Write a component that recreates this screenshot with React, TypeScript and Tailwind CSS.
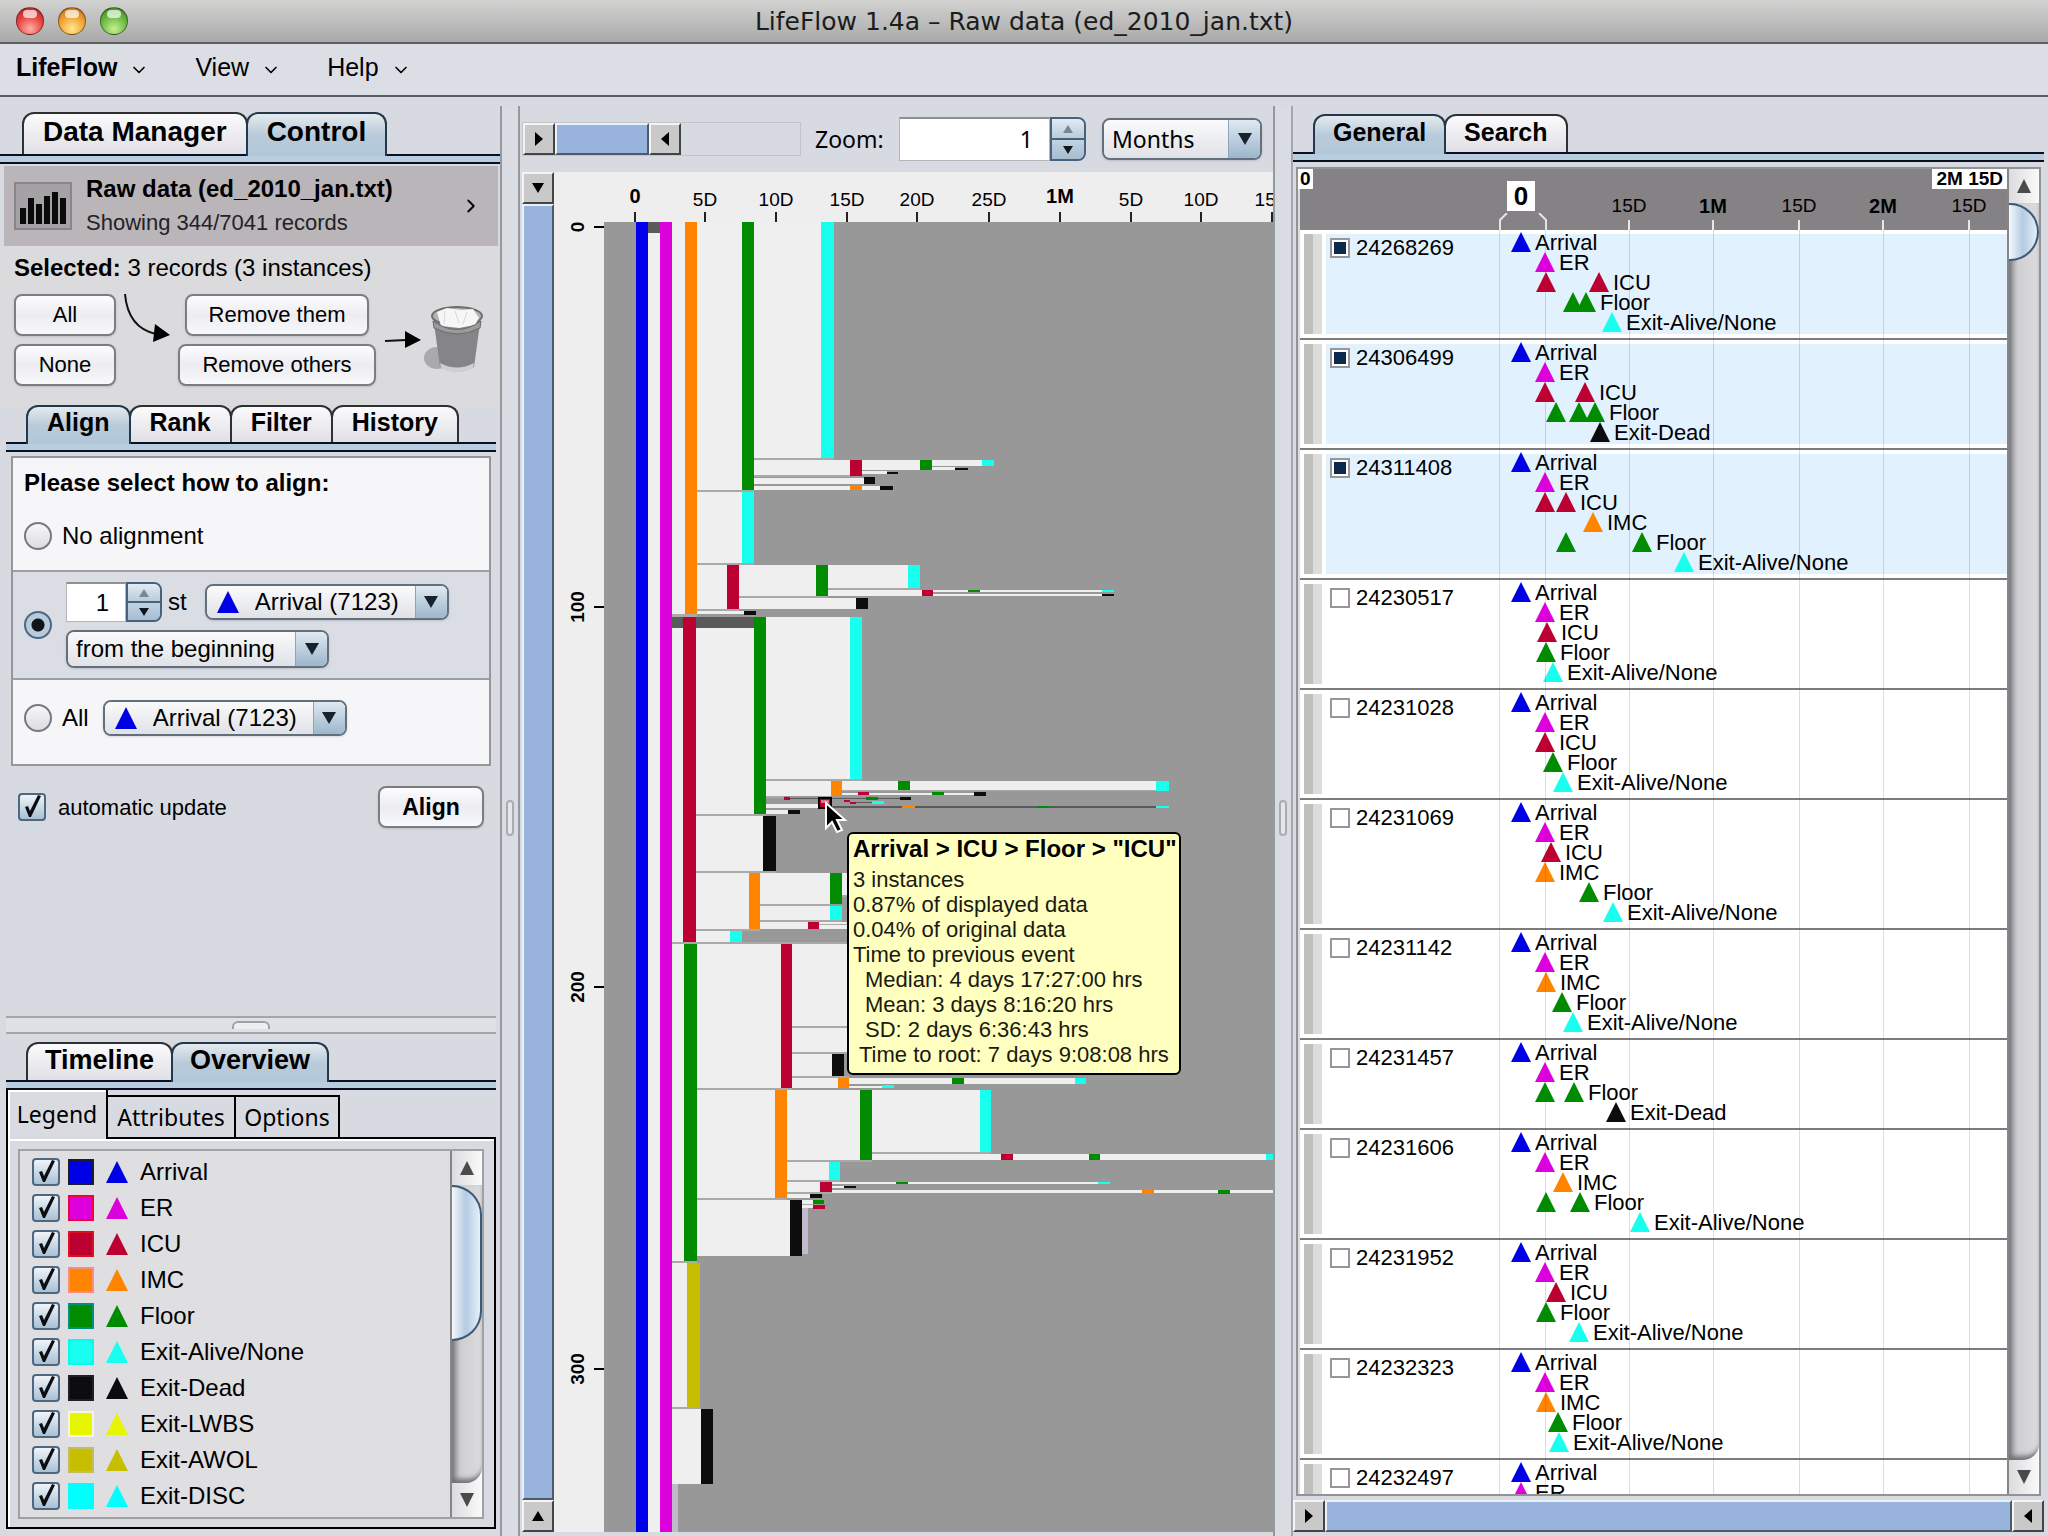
import React from "react";
import { ChevronDown, ChevronRight } from "lucide-react";
import clsx from "clsx";

type EventName =
  | "Arrival"
  | "ER"
  | "ICU"
  | "IMC"
  | "Floor"
  | "Exit-Alive/None"
  | "Exit-Dead"
  | "Exit-LWBS"
  | "Exit-AWOL"
  | "Exit-DISC";

interface LegendItem {
  name: EventName;
  color: string;
  border: string;
}

interface EventLine {
  name: EventName;
  at: number[];
}

interface PatientRecord {
  id: string;
  selected?: boolean;
  lines: EventLine[];
}

const LEGEND: LegendItem[] = [
  { name: "Arrival", color: "#0000e6", border: "#1c1c30" },
  { name: "ER", color: "#dc00dc", border: "#f00040" },
  { name: "ICU", color: "#bd0032", border: "#e01020" },
  { name: "IMC", color: "#ff8400", border: "#ff8a80" },
  { name: "Floor", color: "#008b00", border: "#009080" },
  { name: "Exit-Alive/None", color: "#18fff0", border: "#00fff0" },
  { name: "Exit-Dead", color: "#0c0c0e", border: "#202020" },
  { name: "Exit-LWBS", color: "#e6f500", border: "#f4f4e8" },
  { name: "Exit-AWOL", color: "#c8be00", border: "#c4bc60" },
  { name: "Exit-DISC", color: "#00ffff", border: "#00ffff" },
];

const colorOf = (name: EventName) =>
  LEGEND.find((item) => item.name === name)?.color ?? "#000000";

const line = (name: EventName, ...at: number[]): EventLine => ({ name, at });

const RECORDS: PatientRecord[] = [
  {
    id: "24268269",
    selected: true,
    lines: [line("Arrival", 22), line("ER", 46), line("ICU", 47, 100), line("Floor", 74, 87), line("Exit-Alive/None", 113)],
  },
  {
    id: "24306499",
    selected: true,
    lines: [line("Arrival", 22), line("ER", 46), line("ICU", 46, 86), line("Floor", 57, 80, 96), line("Exit-Dead", 101)],
  },
  {
    id: "24311408",
    selected: true,
    lines: [line("Arrival", 22), line("ER", 46), line("ICU", 46, 67), line("IMC", 94), line("Floor", 67, 143), line("Exit-Alive/None", 185)],
  },
  {
    id: "24230517",
    lines: [line("Arrival", 22), line("ER", 46), line("ICU", 48), line("Floor", 47), line("Exit-Alive/None", 54)],
  },
  {
    id: "24231028",
    lines: [line("Arrival", 22), line("ER", 46), line("ICU", 46), line("Floor", 54), line("Exit-Alive/None", 64)],
  },
  {
    id: "24231069",
    lines: [line("Arrival", 22), line("ER", 46), line("ICU", 52), line("IMC", 46), line("Floor", 90), line("Exit-Alive/None", 114)],
  },
  {
    id: "24231142",
    lines: [line("Arrival", 22), line("ER", 46), line("IMC", 47), line("Floor", 63), line("Exit-Alive/None", 74)],
  },
  {
    id: "24231457",
    lines: [line("Arrival", 22), line("ER", 46), line("Floor", 46, 75), line("Exit-Dead", 117)],
  },
  {
    id: "24231606",
    lines: [line("Arrival", 22), line("ER", 46), line("IMC", 64), line("Floor", 47, 81), line("Exit-Alive/None", 141)],
  },
  {
    id: "24231952",
    lines: [line("Arrival", 22), line("ER", 46), line("ICU", 57), line("Floor", 47), line("Exit-Alive/None", 80)],
  },
  {
    id: "24232323",
    lines: [line("Arrival", 22), line("ER", 46), line("IMC", 47), line("Floor", 59), line("Exit-Alive/None", 60)],
  },
  {
    id: "24232497",
    lines: [line("Arrival", 22), line("ER", 22)],
  },
];

const TIME_TICKS = [
  { at: 130, label: "15D" },
  { at: 214, label: "1M", major: true },
  { at: 300, label: "15D" },
  { at: 384, label: "2M", major: true },
  { at: 470, label: "15D" },
];

const X_TICKS = [
  { x: 635, label: "0", major: true },
  { x: 705, label: "5D" },
  { x: 776, label: "10D" },
  { x: 847, label: "15D" },
  { x: 917, label: "20D" },
  { x: 989, label: "25D" },
  { x: 1060, label: "1M", major: true },
  { x: 1131, label: "5D" },
  { x: 1201, label: "10D" },
  { x: 1272, label: "15D" },
];

const Y_TICKS = [
  { y: 227, label: "0" },
  { y: 607, label: "100" },
  { y: 987, label: "200" },
  { y: 1369, label: "300" },
];

const FILLS = {
  b: "#0000ec",
  m: "#dc00dc",
  o: "#ff8400",
  g: "#008b00",
  c: "#18fff0",
  r: "#bd0032",
  k: "#0e0d0e",
  y: "#c8be00",
  w: "#efefef", // gap between two events
  d: "#5a5a5a",
  s: "#a9a9a9", // thin separators
  l: "#c0bacb",
};

// fill, x1, y1, x2, y2
const BLOCKS: [keyof typeof FILLS, number, number, number, number][] = [
  ["b", 636, 222, 648, 1532], ["w", 648, 222, 660, 1532], ["d", 648, 222, 660, 233],
  ["m", 660, 222, 672, 1532],

  ["w", 672, 222, 685, 615], ["o", 685, 222, 697, 614],
  ["w", 697, 222, 742, 490], ["g", 742, 222, 754, 490],
  ["w", 754, 222, 821, 458], ["c", 821, 222, 834, 458], ["s", 754, 458, 834, 460],
  ["w", 754, 460, 850, 475], ["r", 850, 460, 862, 476],
  ["w", 862, 460, 920, 470], ["g", 920, 460, 932, 470],
  ["w", 932, 460, 982, 466], ["c", 982, 460, 994, 466],
  ["w", 932, 467, 955, 470], ["k", 955, 468, 968, 470],
  ["w", 862, 471, 887, 474], ["k", 887, 472, 898, 474],
  ["s", 754, 475, 850, 477], ["w", 754, 478, 864, 484], ["k", 864, 477, 875, 484],
  ["w", 754, 486, 880, 490], ["o", 850, 486, 862, 490], ["k", 880, 486, 893, 490],
  ["s", 697, 490, 754, 492],
  ["w", 697, 492, 742, 563], ["c", 742, 492, 754, 563], ["s", 697, 563, 754, 565],
  ["w", 697, 565, 727, 609], ["r", 727, 565, 739, 609],
  ["w", 739, 565, 816, 596], ["g", 816, 565, 828, 596],
  ["w", 828, 565, 908, 588], ["c", 908, 565, 920, 588], ["s", 828, 588, 920, 590],
  ["w", 828, 590, 922, 596], ["r", 922, 590, 933, 596],
  ["w", 933, 590, 1102, 592], ["g", 968, 590, 980, 592], ["c", 1102, 590, 1114, 592],
  ["w", 933, 594, 1102, 596], ["k", 1102, 594, 1114, 596], ["s", 739, 596, 828, 598],
  ["w", 739, 598, 856, 609], ["k", 856, 598, 868, 609], ["s", 697, 609, 739, 611],
  ["w", 697, 611, 744, 614], ["k", 744, 611, 756, 615], ["s", 672, 614, 697, 617],

  ["d", 672, 617, 754, 628], ["w", 672, 628, 683, 942], ["r", 683, 617, 696, 942],
  ["w", 696, 628, 754, 814], ["g", 754, 617, 766, 814],
  ["w", 766, 617, 850, 779], ["c", 850, 617, 862, 779], ["s", 766, 779, 862, 781],
  ["w", 766, 781, 831, 796], ["o", 831, 781, 842, 796],
  ["w", 842, 781, 1156, 790], ["g", 898, 781, 910, 790], ["c", 1156, 781, 1169, 791],
  ["s", 842, 790, 1156, 791],
  ["w", 842, 793, 974, 795], ["r", 858, 792, 869, 795], ["g", 932, 792, 944, 795], ["k", 974, 792, 986, 796],
  ["s", 766, 796, 784, 798], ["d", 790, 798, 900, 799], ["r", 784, 797, 790, 800],
  ["g", 866, 797, 878, 800], ["k", 900, 797, 911, 800],
  ["r", 844, 800, 850, 802], ["r", 850, 802, 856, 804], ["d", 856, 802, 872, 803], ["c", 872, 801, 884, 804],
  ["w", 766, 804, 820, 808], ["d", 832, 806, 1156, 808],
  ["o", 902, 806, 915, 808], ["g", 1038, 806, 1049, 808], ["c", 1156, 806, 1169, 808],
  ["w", 766, 810, 788, 814], ["k", 788, 810, 800, 814], ["s", 696, 814, 766, 816],
  ["w", 696, 816, 763, 871], ["k", 763, 816, 776, 871], ["s", 696, 871, 776, 873],
  ["w", 696, 873, 749, 929], ["o", 749, 873, 760, 929],
  ["w", 760, 873, 830, 904], ["g", 830, 873, 842, 904], ["w", 842, 873, 860, 895], ["s", 842, 895, 860, 897],
  ["s", 760, 904, 830, 906], ["w", 760, 906, 830, 920], ["c", 830, 906, 842, 920], ["s", 760, 920, 842, 922],
  ["w", 760, 922, 850, 929], ["s", 819, 924, 850, 925], ["r", 808, 922, 819, 929],
  ["s", 696, 929, 760, 931], ["w", 696, 931, 730, 942], ["c", 730, 931, 742, 942], ["s", 672, 942, 850, 944],

  ["w", 672, 944, 684, 1262], ["g", 684, 944, 697, 1261],
  ["w", 697, 944, 781, 1088], ["r", 781, 944, 792, 1088],
  ["w", 792, 944, 860, 1026], ["s", 792, 1026, 860, 1028],
  ["w", 792, 1028, 860, 1052], ["s", 792, 1052, 860, 1054],
  ["w", 792, 1054, 832, 1076], ["k", 832, 1054, 844, 1076], ["s", 792, 1076, 849, 1078],
  ["w", 792, 1078, 838, 1088], ["o", 838, 1078, 849, 1088],
  ["w", 849, 1078, 1075, 1084], ["g", 952, 1078, 964, 1084], ["c", 1075, 1078, 1086, 1084],
  ["w", 849, 1086, 882, 1088], ["c", 882, 1085, 894, 1088], ["s", 697, 1088, 792, 1090],
  ["w", 697, 1090, 775, 1198], ["o", 775, 1090, 787, 1198],
  ["w", 787, 1090, 860, 1160], ["g", 860, 1090, 872, 1160],
  ["w", 872, 1090, 980, 1152], ["c", 980, 1090, 991, 1152], ["s", 872, 1152, 991, 1154],
  ["w", 872, 1154, 1273, 1160], ["r", 1001, 1154, 1013, 1160], ["g", 1089, 1154, 1100, 1160], ["c", 1266, 1154, 1273, 1160],
  ["s", 787, 1160, 872, 1162],
  ["w", 787, 1162, 829, 1180], ["c", 829, 1162, 840, 1180], ["s", 787, 1180, 840, 1182],
  ["w", 787, 1182, 820, 1192], ["r", 820, 1182, 832, 1192],
  ["w", 832, 1182, 1098, 1184], ["g", 896, 1182, 908, 1184], ["c", 1098, 1182, 1110, 1184],
  ["w", 832, 1186, 844, 1188], ["k", 844, 1186, 856, 1188],
  ["w", 832, 1190, 1273, 1193], ["o", 1142, 1190, 1154, 1194], ["g", 1218, 1190, 1230, 1194],
  ["s", 787, 1192, 832, 1194], ["w", 787, 1194, 810, 1198], ["k", 810, 1194, 822, 1198], ["s", 697, 1198, 787, 1200],
  ["w", 697, 1200, 790, 1256], ["k", 790, 1200, 802, 1256], ["w", 802, 1200, 813, 1208],
  ["s", 802, 1204, 813, 1205], ["l", 802, 1208, 808, 1254], ["g", 813, 1200, 824, 1204], ["r", 813, 1205, 825, 1209],

  ["s", 672, 1261, 697, 1263], ["w", 672, 1263, 687, 1407], ["y", 687, 1263, 700, 1407],
  ["s", 672, 1407, 700, 1409], ["w", 672, 1409, 701, 1484], ["k", 701, 1409, 713, 1484],
  ["l", 672, 1484, 678, 1532],
];

const Triangle = ({ color, size }: { color: string; size: number }) => (
  <svg width={size} height={size} viewBox="0 0 20 20" className="shrink-0">
    <path d="M10 0 L20 20 H0 Z" fill={color} />
  </svg>
);

const Tabs = ({
  labels,
  active,
  className,
  tabClass,
}: {
  labels: string[];
  active: string;
  className?: string;
  tabClass: string;
}) => (
  <div className="shrink-0">
    <div role="tablist" className={clsx("flex items-end", className)}>
      {labels.map((label) => (
        <button
          key={label}
          role="tab"
          aria-selected={label === active}
          className={clsx(
            "-mr-0.5 box-content rounded-t-xl border-2 border-b-0 leading-none font-bold whitespace-nowrap",
            tabClass,
            label === active
              ? "relative z-10 -mb-0.5 border-[#24384c] bg-linear-to-b from-[#e4eaee] via-[#b9cbda] to-[#b3c7d9] pb-1.5"
              : "border-[#2e3034] bg-linear-to-b from-[#fbfbfc] to-[#dfdfe6] pb-1"
          )}
        >
          {label}
        </button>
      ))}
    </div>
    <div className="h-2.5 border-y-2 border-[#0a1020] bg-[#b8cde0]" />
  </div>
);

const CheckBox = ({ id, label }: { id: string; label?: string }) => (
  <span className="relative block size-7 shrink-0">
    <input
      id={id}
      type="checkbox"
      defaultChecked
      aria-label={label}
      className="block size-7 appearance-none rounded-sm border-2 border-[#4d6880] bg-linear-to-b from-[#f0f4f8] to-[#a9c0d4]"
    />
    <svg viewBox="0 0 28 28" className="pointer-events-none absolute inset-0 size-7">
      <path d="M7 14 L10 13 L12 18 L20 2 L23 3 L13 24 L11 24 Z" fill="#0b0f14" />
    </svg>
  </span>
);

const Radio = ({ id, label, checked }: { id: string; label?: string; checked?: boolean }) => (
  <input
    id={id}
    type="radio"
    name="alignment"
    aria-label={label}
    defaultChecked={checked}
    className="size-7 shrink-0 appearance-none rounded-full border-2 border-[#77797d] bg-linear-to-b from-[#f6f6f8] to-[#dcdde2] checked:border-[#4d6880] checked:bg-[radial-gradient(circle,#10161c_0,#10161c_6px,#b7cbdc_7px)]"
  />
);

const Dropdown = ({
  label,
  value,
  icon,
  className,
}: {
  label: string;
  value: string;
  icon?: boolean;
  className: string;
}) => (
  <span className={clsx("relative block overflow-hidden rounded-lg border-2 border-[#62707e] shadow-sm", className)}>
    <select
      aria-label={label}
      className={clsx(
        "block size-full appearance-none bg-linear-to-b from-[#fafafb] to-[#e0e2e7]",
        icon ? "pl-12" : "pl-2"
      )}
    >
      <option>{value}</option>
    </select>
    {icon && (
      <span className="pointer-events-none absolute inset-y-0 left-2.5 flex items-center">
        <Triangle color="#0000e6" size={22} />
      </span>
    )}
    <span className="pointer-events-none absolute inset-y-0 right-0 flex w-8 items-center justify-center border-l border-[#8fa3b4] bg-linear-to-b from-[#dfe9f1] to-[#9db6cc]">
      <svg width="14" height="12" viewBox="0 0 14 12">
        <path d="M0 0 H14 L7 12 Z" fill="#18222c" />
      </svg>
    </span>
  </span>
);

const Spinner = ({ label, className }: { label: string; className: string }) => (
  <span className={clsx("flex", className)}>
    <input
      type="text"
      aria-label={label}
      defaultValue="1"
      className="min-w-0 flex-1 border border-t-2 border-[#b4b6ba] border-t-[#8e9094] bg-white text-right"
    />
    <span className="flex w-9 flex-col overflow-hidden rounded-r-lg border-2 border-[#47627c]">
      <button aria-label="Increase" className="flex flex-1 items-center justify-center border-b-2 border-[#47627c] bg-linear-to-b from-[#e2ebf2] to-[#b9ccdc]">
        <svg width="10" height="8" viewBox="0 0 10 8">
          <path d="M5 0 L10 8 H0 Z" fill="#7b8790" />
        </svg>
      </button>
      <button aria-label="Decrease" className="flex flex-1 items-center justify-center bg-linear-to-b from-[#c2d3e1] to-[#a5bdd1]">
        <svg width="10" height="8" viewBox="0 0 10 8">
          <path d="M0 0 H10 L5 8 Z" fill="#10161c" />
        </svg>
      </button>
    </span>
  </span>
);

const PushButton = ({ children, className }: { children: React.ReactNode; className: string }) => (
  <button
    className={clsx(
      "h-[42px] rounded-lg border-2 border-[#7c7d82] bg-linear-to-b from-[#fdfdfe] via-[#ececf2] to-[#f8f9fb] leading-none shadow-sm",
      className
    )}
  >
    {children}
  </button>
);

const ARROWS = {
  up: "M8 3 L14 13 H2 Z",
  down: "M2 3 H14 L8 13 Z",
  left: "M12 1 V15 L4 8 Z",
  right: "M4 1 V15 L12 8 Z",
};

const RangeButton = ({ dir, label }: { dir: keyof typeof ARROWS; label: string }) => (
  <button
    aria-label={label}
    className="flex size-8 shrink-0 items-center justify-center border-2 border-t-[#f4f4f4] border-r-[#444] border-b-[#444] border-l-[#f4f4f4] bg-[#c9c9c9]"
  >
    <svg width="16" height="16" viewBox="0 0 16 16">
      <path d={ARROWS[dir]} fill="#000" />
    </svg>
  </button>
);

const ScrollBar = ({ label, thumbClass }: { label: string; thumbClass: string }) => (
  <div className="flex w-8 shrink-0 flex-col border-l-2 border-[#85868a] bg-linear-to-r from-[#dcdcdf] to-[#fafafa]">
    <button aria-label={`${label} up`} className="flex h-[34px] shrink-0 items-center justify-center">
      <svg width="14" height="14" viewBox="0 0 14 14">
        <path d="M7 0 L14 14 H0 Z" fill="#4a4a4c" />
      </svg>
    </button>
    <div className="flex-1 overflow-hidden rounded-br-2xl bg-linear-to-r from-[#9c9ca0] via-[#cfcfd2] via-30% to-[#dcdce0] shadow-[inset_2px_-4px_5px_#707074]">
      <div
        className={clsx(
          "rounded-r-full border-2 border-l-0 border-[#3d5a76] bg-linear-to-r from-[#f4f8fb] via-[#b4cbe2] to-[#e6f0f8]",
          thumbClass
        )}
      />
    </div>
    <button aria-label={`${label} down`} className="flex h-[34px] shrink-0 items-center justify-center">
      <svg width="14" height="14" viewBox="0 0 14 14">
        <path d="M0 0 H14 L7 14 Z" fill="#4a4a4c" />
      </svg>
    </button>
  </div>
);

const MenuBar = () => (
  <nav className="flex h-[53px] shrink-0 items-center gap-[46px] border-b-2 border-[#5b5c62] bg-[#dbdee4] pb-1 pl-4 text-[25px]">
    {["LifeFlow", "View", "Help"].map((item, i) => (
      <button key={item} className={clsx("flex items-center gap-3", i === 0 && "font-bold")}>
        {item}
        <ChevronDown size={20} strokeWidth={2} className="mt-1" />
      </button>
    ))}
  </nav>
);

const TrashCan = () => (
  <svg width="62" height="68" viewBox="0 0 62 68">
    <ellipse cx="14" cy="52" rx="13" ry="11" fill="#aaa9ac" />
    <path d="M10 10 L17 61 Q34 70 51 61 L58 10 Z" fill="#858486" />
    <path d="M17 57 Q34 66 51 57 L50 62 Q34 70 18 62 Z" fill="#cfcfd1" />
    <ellipse cx="34" cy="10" rx="25" ry="9" fill="#b4b3b6" stroke="#6e6d70" strokeWidth="2" />
    <path d="M14 6 L24 2 L38 4 L50 3 L56 12 L52 19 L36 22 L18 20 Z" fill="#f7f6f6" />
    <path d="M22 5 L21 18 M32 5 L36 17 M44 6 L40 18" stroke="#d8d6d6" strokeWidth="1" />
    <path d="M10 15 Q34 32 58 15 L57 22 Q34 34 11 22 Z" fill="#9b9a9d" stroke="#6a696c" strokeWidth="1" />
  </svg>
);

const ControlPanel = () => (
  <section className="flex w-[502px] shrink-0 flex-col border-r-2 border-[#9698a0] pt-1.5">
    <Tabs labels={["Data Manager", "Control"]} active="Control" className="pl-[22px]" tabClass="h-9 px-[19px] text-[28px]" />

    <div className="mt-0.5 mr-0.5 ml-1 flex h-20 shrink-0 items-center bg-[#b9b5b9] pr-4 pl-2.5">
      <svg width="58" height="48" viewBox="0 0 58 48" className="shrink-0">
        <rect x="1" y="1" width="56" height="46" fill="#a5a2a5" stroke="#88868a" strokeWidth="2" />
        <path
          d="M6 42V26h6V42zM14 42V16h6V42zM22 42V22h6V42zM30 42V14h6V42zM38 42V10h6V42zM46 42V16h6V42z"
          fill="#0a0a0a"
        />
      </svg>
      <div className="ml-[14px] flex-1 whitespace-nowrap">
        <div className="text-2xl leading-[34px] font-bold">Raw data (ed_2010_jan.txt)</div>
        <div className="text-[22px] leading-[34px] text-[#232225]">Showing 344/7041 records</div>
      </div>
      <ChevronRight size={22} />
    </div>

    <div className="shrink-0 bg-[#dbdadd] pb-[19px]">
      <p className="pl-[14px] text-2xl leading-[44px]">
        <b>Selected:</b> 3 records (3 instances)
      </p>
      <div className="flex items-center pt-1 pl-[14px] text-[22px]">
        <div className="flex flex-col gap-2">
          <PushButton className="w-[102px]">All</PushButton>
          <PushButton className="w-[102px]">None</PushButton>
        </div>
        <svg width="62" height="92" viewBox="0 0 62 92" className="shrink-0">
          <path d="M9 0 Q12 34 40 40" fill="none" stroke="#111" strokeWidth="2" />
          <path d="M39 30 L54 41 L37 48 Z" fill="#000" />
        </svg>
        <div className="flex w-[198px] flex-col items-center gap-2">
          <PushButton className="w-[184px]">Remove them</PushButton>
          <PushButton className="w-full">Remove others</PushButton>
        </div>
        <svg width="47" height="24" viewBox="0 0 47 24" className="shrink-0">
          <path d="M9 13 L30 12" stroke="#111" strokeWidth="2" />
          <path d="M29 3 L45 12 L29 20 Z" fill="#000" />
        </svg>
        <TrashCan />
      </div>
    </div>

    <div className="mr-1 ml-1.5 flex flex-col">
      <Tabs labels={["Align", "Rank", "Filter", "History"]} active="Align" className="pl-5" tabClass="h-[31px] px-[19px] text-[25px]" />
      <form className="mx-[5px] mt-1 border-2 border-[#95979b] bg-[#f6f6f9] text-2xl">
        <div className="h-28 pl-[11px]">
          <h2 className="pt-1 leading-[42px] font-bold">Please select how to align:</h2>
          <div className="flex h-16 items-center gap-2.5">
            <Radio id="align-none" />
            <label htmlFor="align-none">No alignment</label>
          </div>
        </div>
        <div className="flex h-[110px] items-center gap-[14px] border-y-2 border-[#9c9ea3] bg-[#dadde4] pl-[11px]">
          <Radio id="align-nth" label="Align by nth event" checked />
          <div className="flex flex-col gap-2">
            <div className="flex items-center">
              <Spinner label="Occurrence" className="h-10 w-24 [&_input]:pr-4" />
              <span className="mr-[18px] ml-1.5">st</span>
              <Dropdown label="Event" value="Arrival (7123)" icon className="h-9 w-[244px]" />
            </div>
            <Dropdown label="Direction" value="from the beginning" className="h-[38px] w-[263px]" />
          </div>
        </div>
        <div className="flex h-[84px] items-center gap-2.5 pb-2 pl-[11px]">
          <Radio id="align-all" />
          <label htmlFor="align-all">All</label>
          <Dropdown label="Event for all" value="Arrival (7123)" icon className="ml-1 h-9 w-[244px]" />
        </div>
      </form>
      <div className="flex items-center pt-5 pr-3 pl-3">
        <CheckBox id="auto-update" />
        <label htmlFor="auto-update" className="ml-3 flex-1 text-[22px]">
          automatic update
        </label>
        <PushButton className="w-[106px] text-[23px] font-bold">Align</PushButton>
      </div>
    </div>

    <div className="flex-1" />
    <LegendPanel />
  </section>
);

const LegendPanel = () => (
  <div className="mr-1 mb-[7px] ml-1.5 shrink-0">
    <div className="mb-2 flex h-[18px] items-center justify-center border-y-2 border-[#a3a5ab] bg-[#dfe1e6]">
      <div className="h-2 w-[38px] rounded-t-md border-2 border-b-0 border-[#a0a1a5] bg-[#eceef1]" />
    </div>
    <Tabs labels={["Timeline", "Overview"]} active="Overview" className="pl-5" tabClass="h-8 px-[17px] text-[27px]" />

    <div role="tablist" className="flex items-end font-['Noto_Sans','Open_Sans',sans-serif] text-[23px]">
      <button role="tab" aria-selected="true" className="relative z-10 -mb-0.5 h-[49px] w-[102px] border-r-2 border-l-2 border-black bg-[#d9dbe1] shadow-[inset_2px_2px_0_#fff]">
        Legend
      </button>
      <button role="tab" className="-ml-0.5 h-[42px] w-[130px] border-2 border-b-0 border-black">
        Attributes
      </button>
      <button role="tab" className="-ml-0.5 h-[42px] w-[106px] border-2 border-b-0 border-black">
        Options
      </button>
    </div>
    <div className="border-2 border-black px-2.5 pt-2.5 pb-2 shadow-[inset_2px_2px_0_#fff]">
      <div className="flex border-2 border-[#a0a1a3] bg-[#dfdee0]">
        <ul className="flex-1 py-[3px]">
          {LEGEND.map((item) => (
            <li key={item.name} className="flex h-9 items-center pl-3 text-2xl">
              <CheckBox id={`legend-${item.name}`} />
              <span
                className="mr-3 ml-2 size-[26px] border-2"
                style={{ backgroundColor: item.color, borderColor: item.border }}
              />
              <Triangle color={item.color} size={22} />
              <label htmlFor={`legend-${item.name}`} className="ml-3">
                {item.name}
              </label>
            </li>
          ))}
        </ul>
        <ScrollBar label="Scroll legend" thumbClass="h-[156px]" />
      </div>
    </div>
  </div>
);

const VerticalDivider = () => (
  <div className="flex w-4 shrink-0 flex-col items-center bg-[#dadce3]">
    <div className="mt-[694px] h-9 w-2 rounded-sm border-2 border-[#aaacb2] bg-[#e4e6ea]" />
  </div>
);

const FlowChart = () => (
  <svg viewBox="554 172 719 1360" preserveAspectRatio="xMinYMin slice" className="size-full bg-[#efeeef]">
    <rect x="604" y="222" width="669" height="1310" fill="#999899" />
    {X_TICKS.map((tick) => (
      <g key={tick.x}>
        <rect x={tick.x - 1} y="212" width="2" height="10" fill="#222" />
        <text
          x={tick.x}
          y={tick.major ? 203 : 206}
          textAnchor="middle"
          className={tick.major ? "text-[20px] font-bold" : "text-[19px]"}
        >
          {tick.label}
        </text>
      </g>
    ))}
    {Y_TICKS.map((tick) => (
      <g key={tick.y}>
        <rect x="594" y={tick.y - 1} width="10" height="2" fill="#000" />
        <text textAnchor="middle" transform={`translate(584 ${tick.y}) rotate(-90)`} className="text-[19px] font-bold">
          {tick.label}
        </text>
      </g>
    ))}
    <g shapeRendering="crispEdges">
      {BLOCKS.map(([fill, x1, y1, x2, y2], i) => (
        <rect key={i} x={x1} y={y1} width={x2 - x1} height={y2 - y1} fill={FILLS[fill]} />
      ))}
    </g>
    <rect x="819" y="798" width="12" height="10" fill="#bd0032" stroke="#000" strokeWidth="2" />
    <rect x="821" y="800" width="8" height="3" fill="#e0708c" />
    <path
      d="M826 803 L826 828 L832 822 L837 832 L842 830 L837 820 L845 820 Z"
      fill="#000"
      stroke="#fff"
      strokeWidth="2"
    />
  </svg>
);

const Tooltip = () => (
  <div
    role="tooltip"
    className="absolute top-[660px] left-[293px] w-[334px] rounded-md border-2 border-black bg-[#ffffbf] px-1 pb-1.5 text-[22px] leading-[25px] whitespace-nowrap text-[#1a1a10]"
  >
    <div className="mb-1 text-2xl leading-[29px] font-bold text-black">Arrival &gt; ICU &gt; Floor &gt; "ICU"</div>
    <div>3 instances</div>
    <div>0.87% of displayed data</div>
    <div>0.04% of original data</div>
    <div>Time to previous event</div>
    <div className="pl-3">Median: 4 days 17:27:00 hrs</div>
    <div className="pl-3">Mean: 3 days 8:16:20 hrs</div>
    <div className="pl-3">SD: 2 days 6:36:43 hrs</div>
    <div className="pl-1.5">Time to root: 7 days 9:08:08 hrs</div>
  </div>
);

const FlowPanel = () => (
  <section className="flex min-w-0 flex-1 flex-col border-x-2 border-[#9698a0] pb-1 pl-0.5">
    <div className="flex h-[66px] shrink-0 items-center font-['Noto_Sans','Open_Sans',sans-serif] text-[23px]">
      <div className="flex w-[279px] border border-[#c2c4c9]">
        <RangeButton dir="right" label="Range start" />
        <div className="w-[94px] border-2 border-[#e8f0fa] border-r-[#4f5a68] border-b-[#4f5a68] bg-[#98b3dc]" />
        <RangeButton dir="left" label="Range end" />
      </div>
      <span className="ml-3.5 w-[84px]">Zoom:</span>
      <Spinner label="Zoom" className="h-11 w-[187px] [&_input]:pr-4" />
      <Dropdown label="Unit" value="Months" className="ml-4 h-[42px] w-40" />
    </div>
    <div className="flex min-h-0 flex-1">
      <div className="flex w-8 shrink-0 flex-col">
        <RangeButton dir="down" label="Records start" />
        <div className="flex-1 border-2 border-t-[#e8f0fa] border-r-[#4f5a68] border-b-[#4f5a68] border-l-[#e8f0fa] bg-[#98b3dc]" />
        <RangeButton dir="up" label="Records end" />
      </div>
      <div className="relative min-w-0 flex-1">
        <FlowChart />
        <Tooltip />
      </div>
    </div>
  </section>
);

const RecordRow = ({ record }: { record: PatientRecord }) => (
  <li className="flex shrink-0 border-b-2 border-[#7c7b7d] py-1 pl-1">
    <div className="w-[9px] bg-[#bfbfbd]" />
    <div className="mr-1 w-[9px] bg-[#dcdcdb]" />
    <div className={clsx("flex flex-1", record.selected && "bg-[#e2f1fe]")}>
      <div className="w-[173px] pt-1 pl-1">
        <label className="flex items-center gap-1.5 text-[22px] leading-5">
          <input
            type="checkbox"
            defaultChecked={record.selected}
            className="size-5 appearance-none border-2 border-[#989698] bg-white checked:bg-[#0c2a4c] checked:shadow-[inset_0_0_0_2px_#fff]"
          />
          {record.id}
        </label>
      </div>
      <div className="flex-1">
        {record.lines.map((event) => (
          <div key={event.name} className="relative h-5 text-[22px] leading-[17px]">
            {event.at.map((x) => (
              <span key={x} className="absolute -top-0.5 -ml-[10px]" style={{ left: x }}>
                <Triangle color={colorOf(event.name)} size={20} />
              </span>
            ))}
            <span className="absolute top-0 pl-[14px]" style={{ left: Math.max(...event.at) }}>
              {event.name}
            </span>
          </div>
        ))}
      </div>
    </div>
  </li>
);

const RecordList = () => (
  <div className="flex min-w-0 flex-1 flex-col">
    {/* time axis, origin is the left end of the alignment bracket */}
    <div className="relative h-[61px] shrink-0 bg-[#848284] text-[19px] leading-5">
      <span className="absolute top-0 -left-0.5 bg-white px-0.5 font-bold">0</span>
      <span className="absolute top-0 right-0 bg-white px-1 font-bold whitespace-nowrap">2M 15D</span>
      <div className="relative ml-[199px] h-full">
        <span className="absolute top-3 left-2 w-7 bg-white text-center text-[26px] leading-[30px] font-bold">0</span>
        <svg width="48" height="17" className="absolute bottom-0 left-0">
          <path d="M1 17 V7 L8 0 M47 17 V7 L40 0" fill="none" stroke="#e4e4e4" strokeWidth="2" />
        </svg>
        {TIME_TICKS.map((tick) => (
          <span
            key={tick.at}
            className={clsx(
              "absolute bottom-0 -ml-6 flex w-12 flex-col items-center after:mt-1 after:block after:h-2.5 after:w-0.5 after:bg-[#e8e8e8]",
              tick.major && "text-[20px] font-bold"
            )}
            style={{ left: tick.at }}
          >
            {tick.label}
          </span>
        ))}
      </div>
    </div>
    <div className="relative min-h-0 flex-1 overflow-hidden bg-white">
      <ul className="flex flex-col">
        {RECORDS.map((record) => (
          <RecordRow key={record.id} record={record} />
        ))}
      </ul>
      <div className="pointer-events-none absolute inset-y-0 left-[199px]">
        {[0, 46, ...TIME_TICKS.map((tick) => tick.at)].map((x) => (
          <div key={x} className="absolute inset-y-0 w-px bg-[#5a466033]" style={{ left: x }} />
        ))}
      </div>
    </div>
  </div>
);

const RecordPanel = () => (
  <section className="flex w-[757px] shrink-0 flex-col border-l-2 border-[#a4a6ae] pt-2 pr-1">
    <Tabs labels={["General", "Search"]} active="General" className="pl-5" tabClass="h-8 px-[18px] text-[25px]" />
    <div className="mx-[3px] mt-[5px] mb-1 flex min-h-0 flex-1 border-2 border-[#929396] bg-[#dcdce0] pl-0.5">
      <RecordList />
      <ScrollBar label="Scroll records" thumbClass="h-[58px]" />
    </div>
    <div className="mb-1 flex shrink-0">
      <RangeButton dir="right" label="Time start" />
      <div className="flex-1 border-2 border-t-[#e8f0fa] border-r-[#4f5a68] border-b-[#4f5a68] border-l-[#e8f0fa] bg-[#98b3dc]" />
      <RangeButton dir="left" label="Time end" />
    </div>
  </section>
);

const LIGHTS = [
  "bg-[radial-gradient(circle_at_50%_80%,#ffb0a8,#e8403c_55%,#a82420)]",
  "bg-[radial-gradient(circle_at_50%_80%,#ffe890,#f0a030_55%,#b06018)]",
  "bg-[radial-gradient(circle_at_50%_80%,#c8f090,#68b840_55%,#38781c)]",
];

const App = () => (
  <div className="flex h-screen flex-col overflow-hidden bg-[#d8dae1] font-['Liberation_Sans',Arial,sans-serif] text-black">
    <header className="relative flex h-11 shrink-0 items-center justify-center border-b-2 border-[#5e5e5e] bg-linear-to-b from-[#d2d3d1] to-[#a9a9a9]">
      <div className="absolute inset-y-0 left-4 flex items-center gap-3.5">
        {LIGHTS.map((light) => (
          <span
            key={light}
            className={clsx(
              "flex size-7 justify-center rounded-full border border-black/40 pt-0.5 before:h-2 before:w-3.5 before:rounded-full before:bg-white/70",
              light
            )}
          />
        ))}
      </div>
      <h1 className="font-['DejaVu_Sans','Noto_Sans',sans-serif] text-[25px] leading-none text-[#1c1c1c]">
        LifeFlow 1.4a – Raw data (ed_2010_jan.txt)
      </h1>
    </header>
    <MenuBar />
    <main className="flex min-h-0 flex-1 pt-[9px]">
      <ControlPanel />
      <VerticalDivider />
      <FlowPanel />
      <VerticalDivider />
      <RecordPanel />
    </main>
  </div>
);

export default App;
